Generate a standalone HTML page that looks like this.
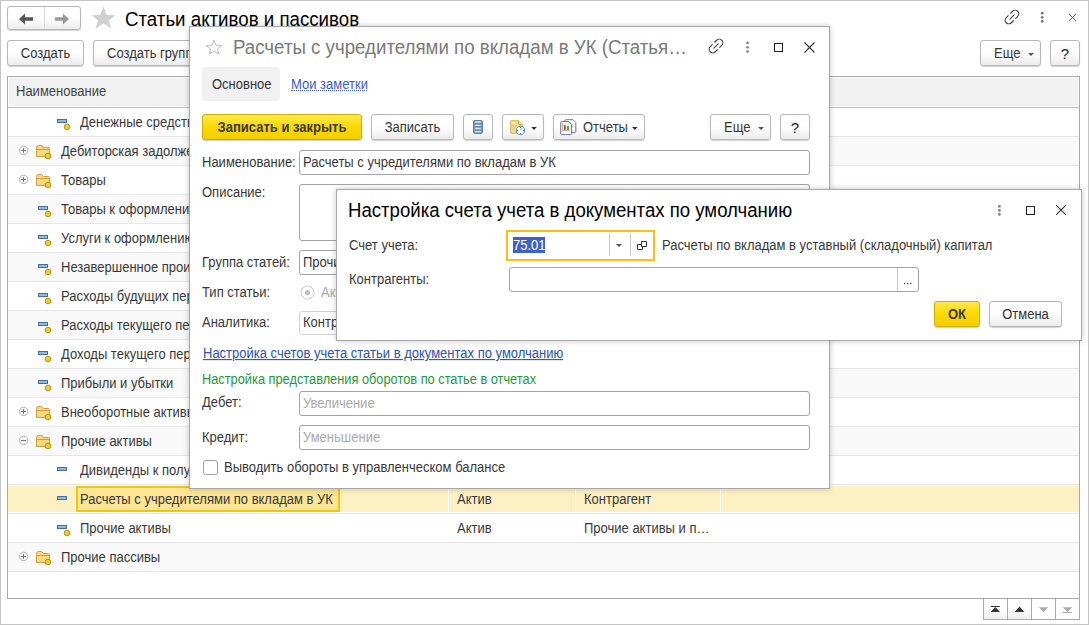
<!DOCTYPE html>
<html><head><meta charset="utf-8">
<style>
*{box-sizing:border-box;margin:0;padding:0}
html,body{width:1089px;height:625px;overflow:hidden;background:#fff}
body{font-family:"Liberation Sans",sans-serif;font-size:13px;color:#383838;position:relative}
.a{position:absolute}
.t{position:absolute;white-space:nowrap;line-height:18px;transform:scaleY(1.1);transform-origin:0 13.5px}
.t[style*="font-size:18"]{transform:scaleY(1.07);transform-origin:0 17.4px}
.btn{position:absolute;border:1px solid #b8b8b8;border-radius:3px;background:linear-gradient(#fff 0,#fff 45%,#ececec 100%);box-shadow:0 1px 1px rgba(0,0,0,.18);height:26px;line-height:26px;text-align:center;color:#333;white-space:nowrap}
.ybtn{position:absolute;border:1px solid #d2ad00;border-radius:3px;background:linear-gradient(#ffe94f 0,#fbd800 50%,#f3cf00 100%);box-shadow:0 1px 1px rgba(0,0,0,.2);height:26px;line-height:26px;text-align:center;color:#3a3a3a;font-weight:bold;white-space:nowrap}
.inp{position:absolute;border:1px solid #a4a4a4;border-radius:3px;background:#fff;height:25px;line-height:23px;padding-left:3px;white-space:nowrap;overflow:hidden}
.row{position:absolute;left:8px;width:1071px;height:29px;border-bottom:1px solid #e6e6e6}
.g{background:#f9f9f9}
.dlg{position:absolute;background:#fff;border:1px solid #a8a8a8;box-shadow:0 0 6px rgba(0,0,0,.22)}
.arr{display:inline-block;width:0;height:0;border-left:4px solid transparent;border-right:4px solid transparent;border-top:4px solid #555;vertical-align:middle}
.btn>span,.ybtn>span{display:inline-block;transform:scaleY(1.1);transform-origin:0 17.5px}
.inp>span{display:inline-block;transform:scaleY(1.1);transform-origin:0 16px}
</style></head><body>

<!-- outer window border -->
<div class="a" style="left:0;top:0;width:1089px;height:625px;border:1px solid #c4c4c4"></div>

<!-- nav buttons -->
<div class="btn" style="left:7px;top:6px;width:74px;height:24px"></div>
<div class="a" style="left:44px;top:7px;width:1px;height:22px;background:#d8d8d8"></div>
<svg class="a" style="left:17px;top:11.5px" width="56" height="14" viewBox="0 0 56 14">
 <path d="M2 7 L8 1.5 L8 5.3 L16 5.3 L16 8.7 L8 8.7 L8 12.5 Z" fill="#555"/>
 <path d="M52 7 L46 1.5 L46 5.3 L38 5.3 L38 8.7 L46 8.7 L46 12.5 Z" fill="#999"/>
</svg>
<!-- star -->
<svg class="a" style="left:0;top:0" width="130" height="35" viewBox="0 0 130 35"><path d="M103.4 6.6 L106.6 14.9 L115.3 15.3 L108.6 20.6 L111.4 28.8 L103.4 23.4 L95.4 28.8 L98.2 20.6 L91.5 15.3 L100.2 14.9 Z" fill="#cfd0d2"/></svg>
<div class="t" style="left:125px;top:9px;font-size:18.7px;line-height:22px;color:#000">Статьи активов и пассивов</div>

<!-- top right icons -->
<svg class="a" style="left:1004.45px;top:9.25px" width="16" height="16" viewBox="0 0 16 16" fill="none" stroke="#444" stroke-width="1.15" stroke-linecap="round"><path d="M6.65 4.25 L8.63 2.27 A3.6 3.6 0 0 1 13.73 7.37 L11.75 9.35"/><path d="M9.35 11.75 L7.37 13.73 A3.6 3.6 0 0 1 2.27 8.63 L4.25 6.65"/><path d="M5.9 10.1 L10.1 5.9"/></svg>
<svg class="a" style="left:1039px;top:10px" width="6" height="14" viewBox="0 0 6 14" fill="#777"><circle cx="3.2" cy="3.2" r="1.35"/><circle cx="3.2" cy="7.3" r="1.35"/><circle cx="3.2" cy="11.4" r="1.35"/></svg>
<svg class="a" style="left:1068px;top:13px" width="9" height="9" viewBox="0 0 9 9" stroke="#555" stroke-width="1"><path d="M1 1 L8 8 M8 1 L1 8"/></svg>

<!-- buttons row -->
<div class="btn" style="left:7px;top:40px;width:77px"><span>Создать</span></div>
<div class="btn" style="left:93px;top:40px;width:110px;text-align:left;padding-left:13px"><span>Создать группу</span></div>
<div class="btn" style="left:980px;top:40px;width:61px"></div><div class="t" style="left:994px;top:45px">Еще</div><div class="a" style="left:1028px;top:53px;width:0;height:0;border-left:3px solid transparent;border-right:3px solid transparent;border-top:3px solid #555"></div>
<div class="btn" style="left:1050px;top:40px;width:30px;font-size:15px;color:#222">?</div>

<!-- table -->
<div class="a" style="left:7px;top:76px;width:1073px;height:523px;border:1px solid #a9a9a9"></div>
<div class="a" style="left:9px;top:78px;width:1069px;height:28px;background:#f2f2f2"></div>
<div class="a" style="left:8px;top:107px;width:1071px;height:1px;background:#c0c0c0"></div>
<div class="t" style="left:16px;top:83px;color:#444">Наименование</div>

<div id="rows"></div>
<div class="row" style="top:108px"></div>
<svg class="a" style="left:57px;top:119px" width="14" height="12" viewBox="0 0 14 12"><rect x="0.5" y="0.5" width="9" height="3" fill="#8ebbe4" stroke="#4a6f96"/><circle cx="10" cy="8" r="2.8" fill="#f4cc2c" stroke="#a98c00" stroke-width="0.9"/></svg>
<div class="t" style="left:80px;top:114px">Денежные средства</div>
<div class="row g" style="top:137px"></div>
<svg class="a" style="left:18px;top:145px" width="11" height="11" viewBox="0 0 11 11"><circle cx="5.6" cy="5.4" r="4.2" fill="#fff" stroke="#b0b0b0"/><path d="M3 5.5 H8" stroke="#777"/><path d="M5.5 3 V8" stroke="#777"/></svg>
<svg class="a" style="left:36px;top:145px" width="18" height="16" viewBox="0 0 18 16"><path d="M0.5 2.5 Q0.5 0.5 2.5 0.5 L5.5 0.5 L7.5 2.5 L12.5 2.5 Q13.5 2.5 13.5 3.5 L13.5 11.5 L0.5 11.5 Z" fill="#f7d983" stroke="#d39c3f"/><path d="M0.5 4.5 L13.5 4.5" stroke="#d39c3f"/><circle cx="12" cy="11" r="2.8" fill="#f4cc2c" stroke="#a98c00" stroke-width="0.9"/></svg>
<div class="t" style="left:61px;top:143px">Дебиторская задолженность</div>
<div class="row" style="top:166px"></div>
<svg class="a" style="left:18px;top:174px" width="11" height="11" viewBox="0 0 11 11"><circle cx="5.6" cy="5.4" r="4.2" fill="#fff" stroke="#b0b0b0"/><path d="M3 5.5 H8" stroke="#777"/><path d="M5.5 3 V8" stroke="#777"/></svg>
<svg class="a" style="left:36px;top:174px" width="18" height="16" viewBox="0 0 18 16"><path d="M0.5 2.5 Q0.5 0.5 2.5 0.5 L5.5 0.5 L7.5 2.5 L12.5 2.5 Q13.5 2.5 13.5 3.5 L13.5 11.5 L0.5 11.5 Z" fill="#f7d983" stroke="#d39c3f"/><path d="M0.5 4.5 L13.5 4.5" stroke="#d39c3f"/><circle cx="12" cy="11" r="2.8" fill="#f4cc2c" stroke="#a98c00" stroke-width="0.9"/></svg>
<div class="t" style="left:61px;top:172px">Товары</div>
<div class="row g" style="top:195px"></div>
<svg class="a" style="left:38px;top:206px" width="14" height="12" viewBox="0 0 14 12"><rect x="0.5" y="0.5" width="9" height="3" fill="#8ebbe4" stroke="#4a6f96"/><circle cx="10" cy="8" r="2.8" fill="#f4cc2c" stroke="#a98c00" stroke-width="0.9"/></svg>
<div class="t" style="left:61px;top:201px">Товары к оформлению</div>
<div class="row" style="top:224px"></div>
<svg class="a" style="left:38px;top:235px" width="14" height="12" viewBox="0 0 14 12"><rect x="0.5" y="0.5" width="9" height="3" fill="#8ebbe4" stroke="#4a6f96"/><circle cx="10" cy="8" r="2.8" fill="#f4cc2c" stroke="#a98c00" stroke-width="0.9"/></svg>
<div class="t" style="left:61px;top:230px">Услуги к оформлению</div>
<div class="row g" style="top:253px"></div>
<svg class="a" style="left:38px;top:264px" width="14" height="12" viewBox="0 0 14 12"><rect x="0.5" y="0.5" width="9" height="3" fill="#8ebbe4" stroke="#4a6f96"/><circle cx="10" cy="8" r="2.8" fill="#f4cc2c" stroke="#a98c00" stroke-width="0.9"/></svg>
<div class="t" style="left:61px;top:259px">Незавершенное производство</div>
<div class="row" style="top:282px"></div>
<svg class="a" style="left:38px;top:293px" width="14" height="12" viewBox="0 0 14 12"><rect x="0.5" y="0.5" width="9" height="3" fill="#8ebbe4" stroke="#4a6f96"/><circle cx="10" cy="8" r="2.8" fill="#f4cc2c" stroke="#a98c00" stroke-width="0.9"/></svg>
<div class="t" style="left:61px;top:288px">Расходы будущих периодов</div>
<div class="row g" style="top:311px"></div>
<svg class="a" style="left:38px;top:322px" width="14" height="12" viewBox="0 0 14 12"><rect x="0.5" y="0.5" width="9" height="3" fill="#8ebbe4" stroke="#4a6f96"/><circle cx="10" cy="8" r="2.8" fill="#f4cc2c" stroke="#a98c00" stroke-width="0.9"/></svg>
<div class="t" style="left:61px;top:317px">Расходы текущего периода</div>
<div class="row" style="top:340px"></div>
<svg class="a" style="left:38px;top:351px" width="14" height="12" viewBox="0 0 14 12"><rect x="0.5" y="0.5" width="9" height="3" fill="#8ebbe4" stroke="#4a6f96"/><circle cx="10" cy="8" r="2.8" fill="#f4cc2c" stroke="#a98c00" stroke-width="0.9"/></svg>
<div class="t" style="left:61px;top:346px">Доходы текущего периода</div>
<div class="row g" style="top:369px"></div>
<svg class="a" style="left:38px;top:380px" width="14" height="12" viewBox="0 0 14 12"><rect x="0.5" y="0.5" width="9" height="3" fill="#8ebbe4" stroke="#4a6f96"/><circle cx="10" cy="8" r="2.8" fill="#f4cc2c" stroke="#a98c00" stroke-width="0.9"/></svg>
<div class="t" style="left:61px;top:375px">Прибыли и убытки</div>
<div class="row" style="top:398px"></div>
<svg class="a" style="left:18px;top:406px" width="11" height="11" viewBox="0 0 11 11"><circle cx="5.6" cy="5.4" r="4.2" fill="#fff" stroke="#b0b0b0"/><path d="M3 5.5 H8" stroke="#777"/><path d="M5.5 3 V8" stroke="#777"/></svg>
<svg class="a" style="left:36px;top:406px" width="18" height="16" viewBox="0 0 18 16"><path d="M0.5 2.5 Q0.5 0.5 2.5 0.5 L5.5 0.5 L7.5 2.5 L12.5 2.5 Q13.5 2.5 13.5 3.5 L13.5 11.5 L0.5 11.5 Z" fill="#f7d983" stroke="#d39c3f"/><path d="M0.5 4.5 L13.5 4.5" stroke="#d39c3f"/><circle cx="12" cy="11" r="2.8" fill="#f4cc2c" stroke="#a98c00" stroke-width="0.9"/></svg>
<div class="t" style="left:61px;top:404px">Внеоборотные активы</div>
<div class="row g" style="top:427px"></div>
<svg class="a" style="left:18px;top:435px" width="11" height="11" viewBox="0 0 11 11"><circle cx="5.6" cy="5.4" r="4.2" fill="#fff" stroke="#b0b0b0"/><path d="M3 5.5 H8" stroke="#777"/></svg>
<svg class="a" style="left:36px;top:435px" width="18" height="16" viewBox="0 0 18 16"><path d="M0.5 2.5 Q0.5 0.5 2.5 0.5 L5.5 0.5 L7.5 2.5 L12.5 2.5 Q13.5 2.5 13.5 3.5 L13.5 11.5 L0.5 11.5 Z" fill="#f7d983" stroke="#d39c3f"/><path d="M0.5 4.5 L13.5 4.5" stroke="#d39c3f"/><circle cx="12" cy="11" r="2.8" fill="#f4cc2c" stroke="#a98c00" stroke-width="0.9"/></svg>
<div class="t" style="left:61px;top:433px">Прочие активы</div>
<div class="row" style="top:456px"></div>
<svg class="a" style="left:57px;top:467px" width="14" height="12" viewBox="0 0 14 12"><rect x="0.5" y="0.5" width="9" height="3" fill="#8ebbe4" stroke="#4a6f96"/></svg>
<div class="t" style="left:80px;top:462px">Дивиденды к получению</div>
<div class="row" style="top:485px;background:#fdf0c2;box-shadow:inset 0 1px #fff, inset 0 -1px #fff"></div>
<svg class="a" style="left:57px;top:496px" width="14" height="12" viewBox="0 0 14 12"><rect x="0.5" y="0.5" width="9" height="3" fill="#8ebbe4" stroke="#4a6f96"/></svg>
<div class="a" style="left:76px;top:486px;width:264px;height:26px;border:2px solid #f6c30e;background:#fce594"></div>
<div class="t" style="left:80px;top:491px">Расчеты с учредителями по вкладам в УК</div>
<div class="row" style="top:514px"></div>
<svg class="a" style="left:57px;top:525px" width="14" height="12" viewBox="0 0 14 12"><rect x="0.5" y="0.5" width="9" height="3" fill="#8ebbe4" stroke="#4a6f96"/><circle cx="10" cy="8" r="2.8" fill="#f4cc2c" stroke="#a98c00" stroke-width="0.9"/></svg>
<div class="t" style="left:80px;top:520px">Прочие активы</div>
<div class="row g" style="top:543px"></div>
<svg class="a" style="left:18px;top:551px" width="11" height="11" viewBox="0 0 11 11"><circle cx="5.6" cy="5.4" r="4.2" fill="#fff" stroke="#b0b0b0"/><path d="M3 5.5 H8" stroke="#777"/><path d="M5.5 3 V8" stroke="#777"/></svg>
<svg class="a" style="left:36px;top:551px" width="18" height="16" viewBox="0 0 18 16"><path d="M0.5 2.5 Q0.5 0.5 2.5 0.5 L5.5 0.5 L7.5 2.5 L12.5 2.5 Q13.5 2.5 13.5 3.5 L13.5 11.5 L0.5 11.5 Z" fill="#f7d983" stroke="#d39c3f"/><path d="M0.5 4.5 L13.5 4.5" stroke="#d39c3f"/><circle cx="12" cy="11" r="2.8" fill="#f4cc2c" stroke="#a98c00" stroke-width="0.9"/></svg>
<div class="t" style="left:61px;top:549px">Прочие пассивы</div>
<div class="t" style="left:457px;top:491px">Актив</div>
<div class="t" style="left:584px;top:491px">Контрагент</div>
<div class="t" style="left:457px;top:520px">Актив</div>
<div class="t" style="left:584px;top:520px">Прочие активы и п…</div>
<div class="a" style="left:448px;top:485px;width:1px;height:28px;background:#fff"></div>
<div class="a" style="left:575px;top:485px;width:1px;height:28px;background:#fff"></div>
<div class="a" style="left:720px;top:485px;width:1px;height:28px;background:#fff"></div>
<!-- /rows --><!-- /rows --><!-- /rows --><!-- /rows -->

<!-- scroll buttons -->
<div class="a" style="left:983px;top:599px;width:97px;height:21px;border:1px solid #a9a9a9;border-top:none;background:#fff"></div>
<div class="a" style="left:984px;top:599px;width:47px;height:20px;background:linear-gradient(#fff 40%,#efefef)"></div>
<div class="a" style="left:1007px;top:599px;width:1px;height:20px;background:#a9a9a9"></div>
<div class="a" style="left:1031px;top:599px;width:1px;height:20px;background:#a9a9a9"></div>
<div class="a" style="left:1055px;top:599px;width:1px;height:20px;background:#a9a9a9"></div>
<svg class="a" style="left:983px;top:599px" width="97" height="21" viewBox="983 599 97 21">
 <path d="M990.8 606.5 H999.8" stroke="#333" stroke-width="1"/>
 <path d="M995.3 607 L1000 612 L990.6 612 Z" fill="#333"/>
 <path d="M1019.5 606.6 L1024.3 612 L1014.7 612 Z" fill="#333"/>
 <path d="M1038.8 607.2 L1048.2 607.2 L1043.5 612 Z" fill="#aaa"/>
 <path d="M1062.8 607.2 L1072.2 607.2 L1067.5 612 Z" fill="#aaa"/>
 <path d="M1062.8 612.5 H1072.2" stroke="#aaa" stroke-width="1"/>
</svg>

<!-- main dialog -->
<div class="dlg" style="left:189px;top:26px;width:641px;height:463px"></div>
<svg class="a" style="left:200px;top:34px" width="30" height="25" viewBox="200 34 30 25"><path d="M214 40 L216 45.3 L221.6 45.6 L217.3 49 L218.9 54.2 L214 50.9 L209.1 54.2 L210.7 49 L206.4 45.6 L212 45.3 Z" fill="none" stroke="#b8bec4" stroke-width="1"/></svg>
<div class="t" style="left:233px;top:37px;font-size:18.7px;line-height:22px;color:#7a7a7a">Расчеты с учредителями по вкладам в УК (Статья…</div>
<svg class="a" style="left:707.55px;top:38.45px" width="16" height="16" viewBox="0 0 16 16" fill="none" stroke="#444" stroke-width="1.15" stroke-linecap="round"><path d="M6.65 4.25 L8.63 2.27 A3.6 3.6 0 0 1 13.73 7.37 L11.75 9.35"/><path d="M9.35 11.75 L7.37 13.73 A3.6 3.6 0 0 1 2.27 8.63 L4.25 6.65"/><path d="M5.9 10.1 L10.1 5.9"/></svg>
<svg class="a" style="left:744px;top:40px" width="7" height="14" viewBox="0 0 7 14" fill="#808080"><circle cx="3.5" cy="2.9" r="1.35"/><circle cx="3.5" cy="7.3" r="1.35"/><circle cx="3.5" cy="11.5" r="1.35"/></svg>
<div class="a" style="left:774px;top:43px;width:9px;height:9px;border:1.3px solid #222"></div>
<svg class="a" style="left:803.5px;top:42px" width="11" height="11" viewBox="0 0 11 11" stroke="#333" stroke-width="1.1"><path d="M0.5 0.5 L10.5 10.5 M10.5 0.5 L0.5 10.5"/></svg>
<div class="a" style="left:202px;top:67px;width:78px;height:34px;background:#f1f1f1;border-radius:3px"></div>
<div class="t" style="left:212px;top:76px;color:#333">Основное</div>
<div class="t" style="left:291px;top:76px;color:#3b5ec2">Мои заметки</div>
<div class="a" style="left:291px;top:90px;width:76px;height:0;border-top:1px dotted #3b5ec2"></div>

<div class="ybtn" style="left:202px;top:114px;width:160px"><span>Записать и закрыть</span></div>
<div class="btn" style="left:371px;top:114px;width:83px"><span>Записать</span></div>
<div class="btn" style="left:463px;top:114px;width:30px"></div>

<div class="btn" style="left:502px;top:114px;width:42px"></div>


<div class="btn" style="left:553px;top:114px;width:92px"></div>

<div class="t" style="left:583px;top:119px">Отчеты</div>
<svg class="a" style="left:460px;top:110px" width="190" height="32" viewBox="460 110 190 32">
 <rect x="473.5" y="120.5" width="9" height="13" rx="1.6" fill="#7d9fc0" stroke="#5d82a6"/>
 <path d="M474 123.8 H482 M474 127 H482 M474 130.2 H482" stroke="#5d82a6" stroke-width="0.9"/>
 <path d="M475.2 122 H480.8 M475.2 125.3 H480.8 M475.2 128.5 H480.8 M475.2 131.7 H480.8" stroke="#d6e6f4" stroke-width="1.3"/>
 <path d="M510.7 121.8 Q510.7 120.7 511.8 120.7 L518.6 120.7 L522.4 124.5 L522.4 132.2 Q522.4 133.3 521.3 133.3 L511.8 133.3 Q510.7 133.3 510.7 132.2 Z" fill="#f5e08c" stroke="#d2ae4e" stroke-width="1"/>
 <path d="M518.6 120.7 L518.6 124.5 L522.4 124.5" fill="#fbeeb8" stroke="#d2ae4e" stroke-width="1"/>
 <path d="M512.3 125.6 H514.5 M515.3 125.6 H517.5 M512.3 127.4 H513 M513.8 127.4 H516 M512.3 129.2 H514.8" stroke="#d9bd6a" stroke-width="0.9"/>
 <circle cx="520.5" cy="130.5" r="4.2" fill="#fff" stroke="#5c8ec4" stroke-width="1.1"/>
 <circle cx="520.5" cy="127.5" r="0.6" fill="#e00"/><circle cx="520.5" cy="133.5" r="0.6" fill="#e00"/>
 <circle cx="517.5" cy="130.5" r="0.6" fill="#e00"/><circle cx="523.5" cy="130.5" r="0.6" fill="#e00"/>
 <path d="M520.3 130.5 L522 128.2" stroke="#7aa0d0" stroke-width="0.9"/>
 <path d="M531.2 127 H536.8 L534 129.9 Z" fill="#333"/>
 <path d="M564.7 121.2 Q564.7 119.7 566.2 119.7 L573 119.7 L575.8 122.5 L575.8 131.6 Q575.8 132.6 574.8 132.6 L564.7 132.6 Z" fill="#fff" stroke="#6c7a88" stroke-width="1"/>
 <path d="M571.5 124 V128" stroke="#4cb030" stroke-width="1.6"/>
 <path d="M560.7 122.5 Q560.7 121.5 561.7 121.5 L568.5 121.5 L571.6 124.6 L571.6 133.6 Q571.6 134.6 570.6 134.6 L561.7 134.6 Q560.7 134.6 560.7 133.6 Z" fill="#fff" stroke="#6c7a88" stroke-width="1"/>
 <path d="M562.6 123.2 V130.6 H569.6" fill="none" stroke="#888" stroke-width="0.7"/>
 <path d="M564.8 125 V130" stroke="#e8321e" stroke-width="1.8"/>
 <path d="M568 126 V130" stroke="#3fa52a" stroke-width="1.8"/>
 <path d="M632 127 H637.6 L634.8 129.9 Z" fill="#333"/>
</svg>


<div class="btn" style="left:710px;top:114px;width:61px"></div><div class="t" style="left:724px;top:119px">Еще</div><div class="a" style="left:758px;top:127px;width:0;height:0;border-left:3px solid transparent;border-right:3px solid transparent;border-top:3px solid #555"></div>
<div class="btn" style="left:780px;top:114px;width:30px;font-size:15px;color:#222">?</div>

<div class="t" style="left:202px;top:154px">Наименование:</div>
<div class="inp" style="left:299px;top:150px;width:511px"><span>Расчеты с учредителями по вкладам в УК</span></div>
<div class="t" style="left:202px;top:184px">Описание:</div>
<div class="inp" style="left:299px;top:184px;width:511px;height:57px"></div>
<div class="t" style="left:202px;top:254px">Группа статей:</div>
<div class="inp" style="left:299px;top:250px;width:511px"><span>Прочие активы</span></div>
<div class="t" style="left:202px;top:284px">Тип статьи:</div>
<svg class="a" style="left:300px;top:285px" width="15" height="15" viewBox="0 0 15 15">
 <circle cx="7.5" cy="7.5" r="6.5" fill="#fff" stroke="#cfcfcf"/>
 <circle cx="7.5" cy="7.5" r="2.5" fill="#bbb"/>
</svg>
<div class="t" style="left:321px;top:284px;color:#aaa">Актив</div>
<div class="t" style="left:202px;top:314px">Аналитика:</div>
<div class="inp" style="left:299px;top:311px;width:511px;height:24px;line-height:22px;border-color:#d2d2d2"><span>Контрагент</span></div>
<div class="t" style="left:203px;top:345px;color:#2a52b0;text-decoration:underline">Настройка счетов учета статьи в документах по умолчанию</div>
<div class="t" style="left:202px;top:371px;color:#1e9a3c;font-size:12.8px">Настройка представления оборотов по статье в отчетах</div>
<div class="t" style="left:202px;top:394px">Дебет:</div>
<div class="inp" style="left:299px;top:391px;width:511px;color:#aaa"><span>Увеличение</span></div>
<div class="t" style="left:202px;top:429px">Кредит:</div>
<div class="inp" style="left:299px;top:425px;width:511px;color:#aaa"><span>Уменьшение</span></div>
<div class="a" style="left:203px;top:460px;width:15px;height:15px;border:1px solid #a0a0a0;border-radius:3px;background:#fff"></div>
<div class="t" style="left:224px;top:459px">Выводить обороты в управленческом балансе</div>
<!-- /dlg1 -->
<!-- settings dialog -->
<div class="dlg" style="left:336px;top:189px;width:746px;height:152px"></div>
<div class="t" style="left:348px;top:200px;font-size:18.6px;line-height:22px;color:#000">Настройка счета учета в документах по умолчанию</div>
<svg class="a" style="left:996px;top:203px" width="7" height="14" viewBox="0 0 7 14" fill="#808080"><circle cx="3.4" cy="3.3" r="1.4"/><circle cx="3.4" cy="7.4" r="1.4"/><circle cx="3.4" cy="11.4" r="1.4"/></svg>
<div class="a" style="left:1026px;top:206px;width:9px;height:9px;border:1.3px solid #222"></div>
<svg class="a" style="left:1056px;top:205px" width="10" height="10" viewBox="0 0 10 10" stroke="#333" stroke-width="1.1"><path d="M0.3 0.3 L9.7 9.7 M9.7 0.3 L0.3 9.7"/></svg>
<div class="t" style="left:349px;top:237px">Счет учета:</div>
<div class="a" style="left:506px;top:230px;width:149px;height:31px;border:2px solid #f5c20f;background:#fff"></div>
<div class="a" style="left:513px;top:237px;width:32px;height:16px;background:#3d63c7"></div>
<div class="t" style="left:513px;top:237px;color:#fff">75.01</div>
<div class="a" style="left:609px;top:234px;width:1px;height:22px;background:#c8c8c8"></div>
<div class="a" style="left:630px;top:234px;width:1px;height:22px;background:#c8c8c8"></div>
<div class="a" style="left:616px;top:244px"><span class="arr" style="vertical-align:top;border-width:3.5px 3.5px 0 3.5px"></span></div>
<svg class="a" style="left:630px;top:235px" width="20" height="20" viewBox="630 235 20 20" fill="none" stroke="#333" stroke-width="1"><path d="M641.5 241.5 H646.5 V246.5 H641.5 Z"/><path d="M641 244.5 H637.5 V249.5 H642.5 V247"/></svg>
<div class="t" style="left:662px;top:237px">Расчеты по вкладам в уставный (складочный) капитал</div>
<div class="t" style="left:349px;top:271px">Контрагенты:</div>
<div class="inp" style="left:509px;top:267px;width:410px;height:25px"></div>
<div class="a" style="left:897px;top:268px;width:1px;height:23px;background:#c8c8c8"></div>
<svg class="a" style="left:900px;top:280px" width="15" height="7" viewBox="900 280 15 7" fill="#444"><rect x="903.9" y="282.9" width="1.3" height="1.3"/><rect x="907" y="282.9" width="1.3" height="1.3"/><rect x="910.1" y="282.9" width="1.3" height="1.3"/></svg>
<div class="ybtn" style="left:934px;top:301px;width:46px"><span>ОК</span></div>
<div class="btn" style="left:989px;top:301px;width:73px"><span>Отмена</span></div>
<!-- /dlg2 -->
</body></html>
